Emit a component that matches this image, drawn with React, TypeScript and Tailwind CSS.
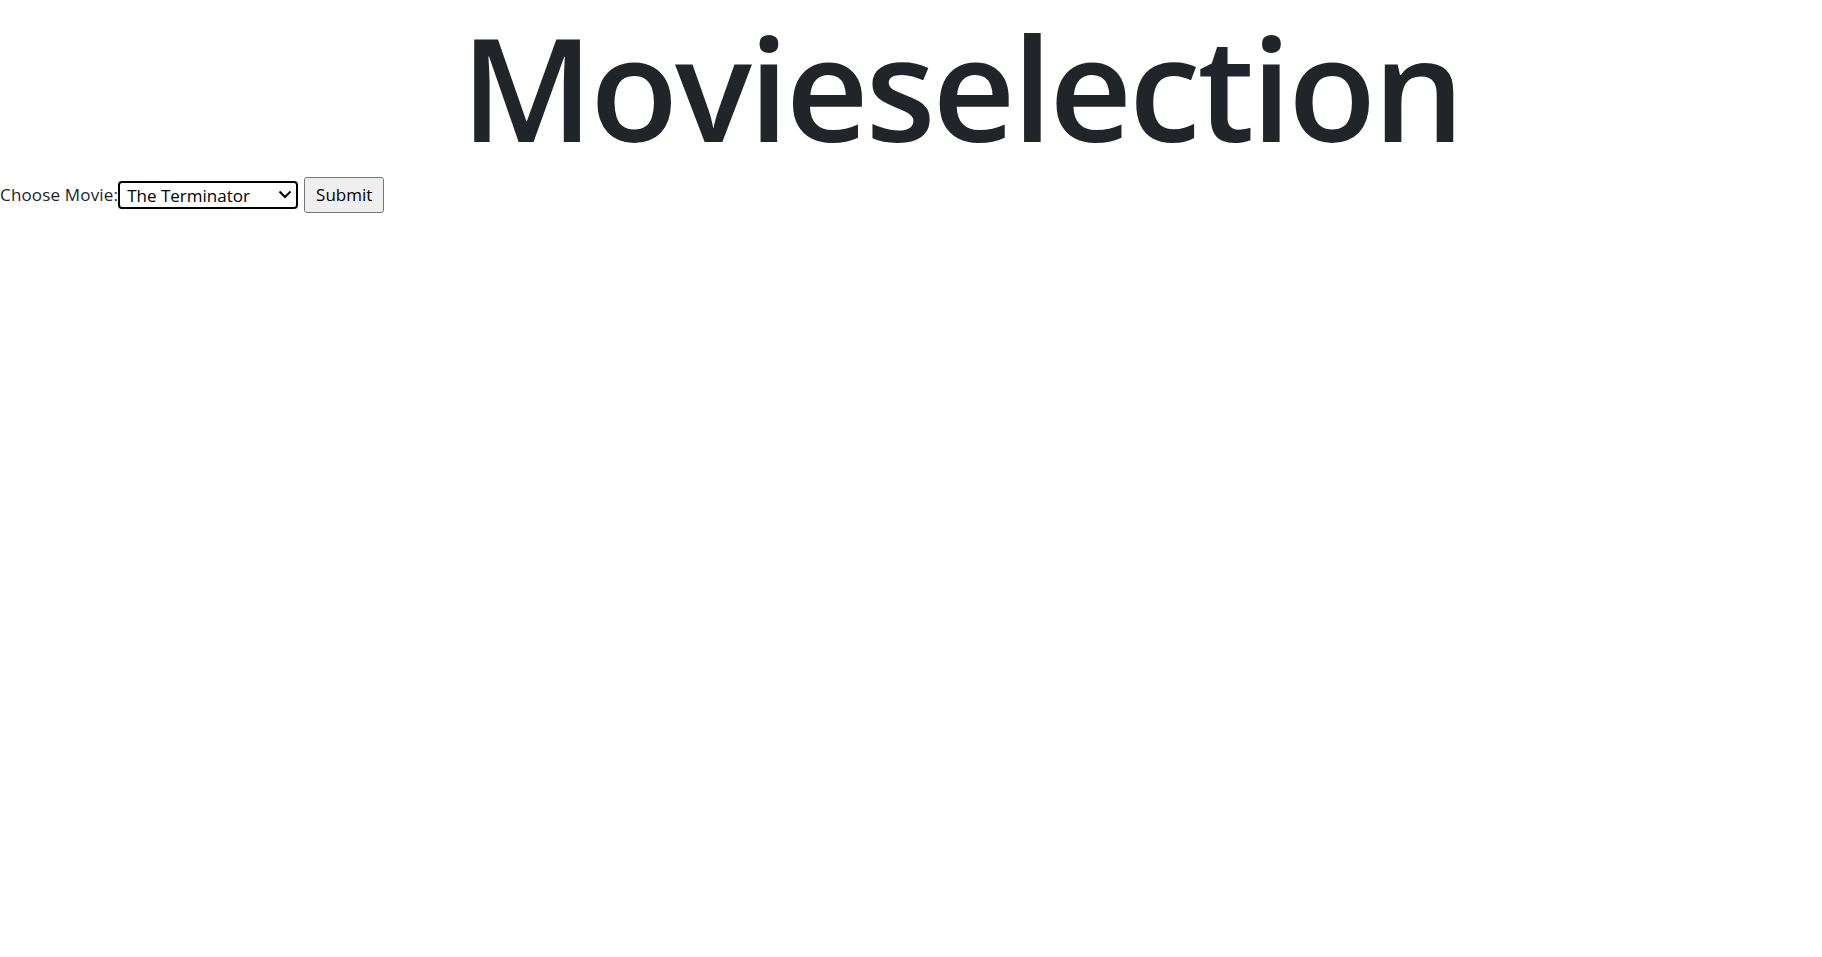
import { useState } from 'react'

const movies = ['The Terminator', 'Terminator 2: Judgment Day', 'Alien', 'Aliens', 'Predator']

export default function App() {
  const [movie, setMovie] = useState(movies[0])

  return (
    <div className="min-h-screen bg-white text-[#212529] [font-family:'Open_Sans',sans-serif]">
      <h1 className="pl-[100px] text-center text-[144px] font-semibold leading-[1.2] tracking-[-0.022em]">
        Movieselection
      </h1>

      <form
        className="mt-[4px] flex items-center text-[17px]"
        onSubmit={(e) => e.preventDefault()}
      >
        <label htmlFor="movie" className="tracking-[0.01em]">
          Choose Movie:
        </label>
        <div className="relative">
          <select
            id="movie"
            value={movie}
            onChange={(e) => setMovie(e.target.value)}
            className="h-[28px] w-[180px] appearance-none rounded-[4px] border-2 border-black bg-white pl-[7px] pr-[26px] text-[17px] text-black outline-none"
          >
            {movies.map((m) => (
              <option key={m}>{m}</option>
            ))}
          </select>
          <svg
            className="pointer-events-none absolute right-[6px] top-[9px]"
            width="14"
            height="9"
            viewBox="0 0 14 9"
            fill="none"
          >
            <path d="M1.5 1.5 7 7l5.5-5.5" stroke="black" strokeWidth="2" />
          </svg>
        </div>
        <button
          type="submit"
          className="ml-[6px] h-[36px] w-[80px] rounded-[3px] border border-[#767676] bg-[#efefef] text-[17px] text-black"
        >
          Submit
        </button>
      </form>
    </div>
  )
}
